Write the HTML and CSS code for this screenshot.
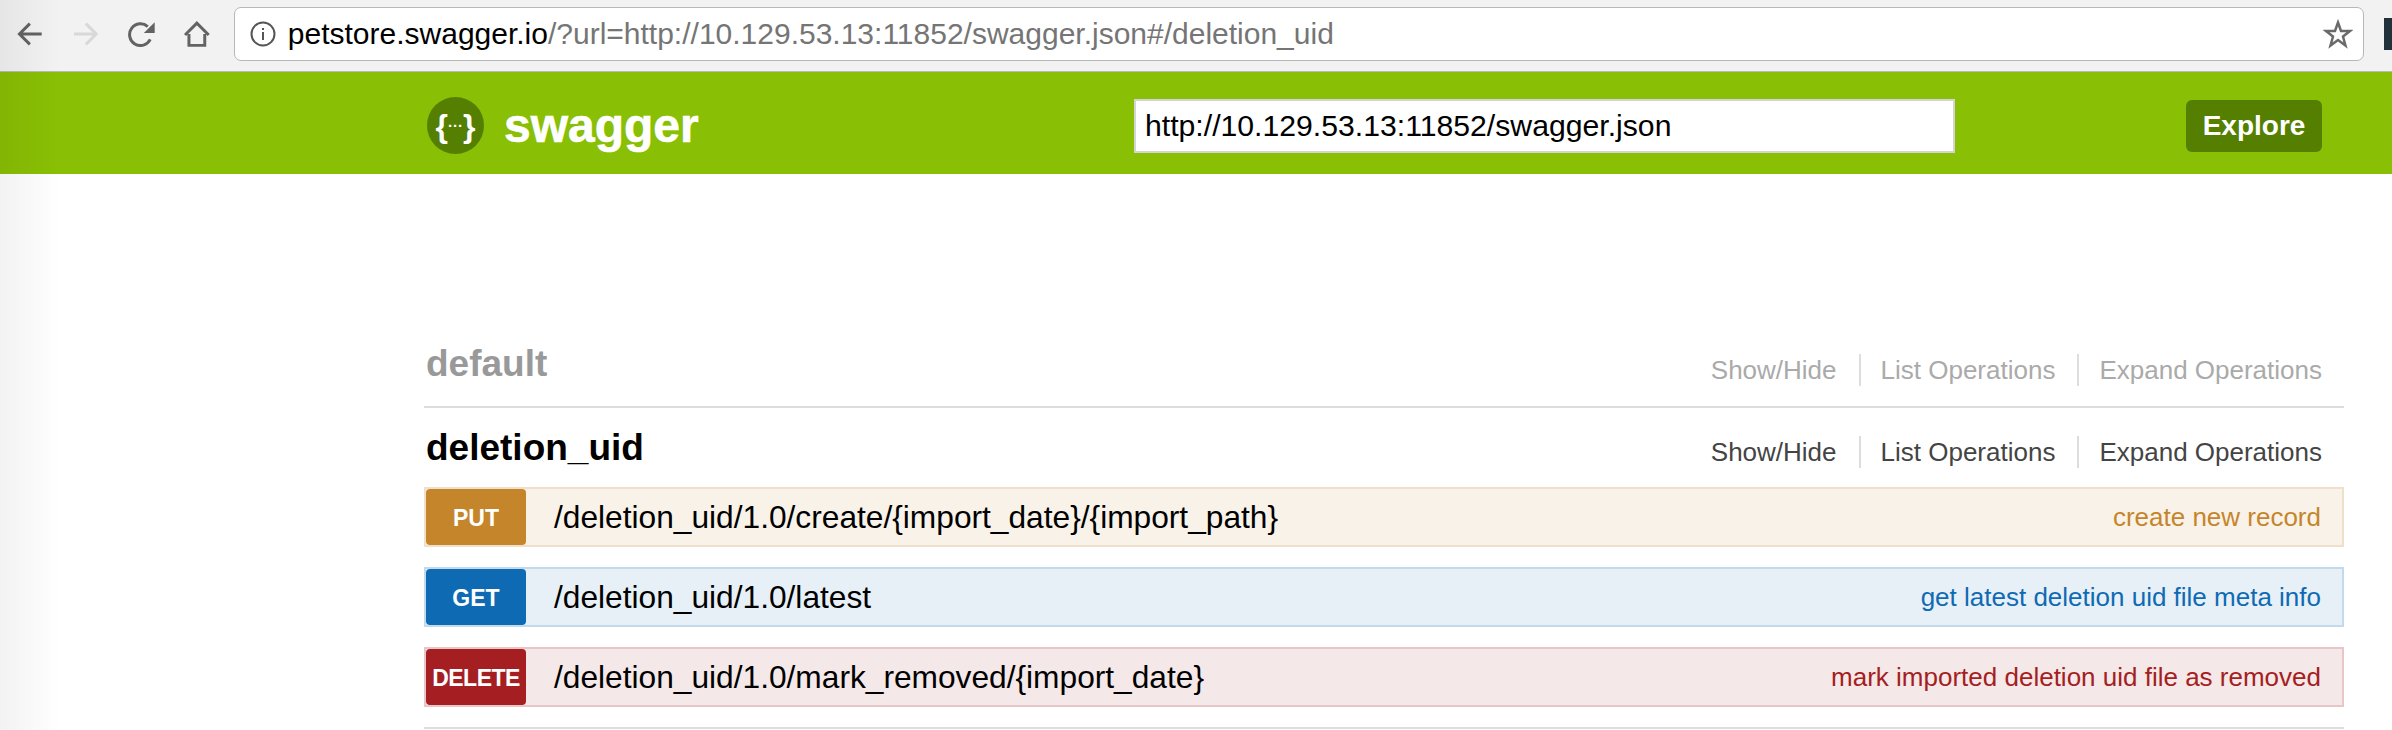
FILE: index.html
```html
<!DOCTYPE html>
<html>

<head>
    <meta charset="UTF-8">
    <title>Swagger UI</title>
    <link rel="stylesheet" href="styles.css">
</head>

<body>
    <div class="edge-shade"></div>

    <div class="toolbar">
        <svg class="nav-icon" viewBox="0 0 26 26"><path d="M25 13H3M13 2.500 2.500 13 13 23.500" /></svg>
        <svg class="nav-icon nav-off" viewBox="0 0 26 26"><path d="M1 13H23M13 2.500 23.500 13 13 23.500" /></svg>
        <svg class="nav-icon nav-reload" viewBox="0 0 28 26"><path d="M22.500 18.500A11 11 0 1 1 20 5.500" /><path class="nav-fill" d="M27 1V12H16Z" /></svg>
        <svg class="nav-icon" viewBox="0 0 26 26"><path d="M5 13V24.500H21V13M1 14 13 2 25 14" /></svg>
        <div class="omnibox">
            <svg class="info-icon" viewBox="0 0 26 26">
                <circle cx="13" cy="13" r="11.500" />
                <path d="M13 11V19M13 7V9" />
            </svg>
            <span class="url"><b>petstore.swagger.io</b>/?url=http://10.129.53.13:11852/swagger.json#/deletion_uid</span>
            <svg class="star-icon" viewBox="0 0 30 30"><path d="M15 3.500 18 12H27L20 17.500 22.500 26.500 15 21 7.500 26.500 10 17.500 3 12H12Z" /></svg>
        </div>
        <div class="profile"></div>
    </div>

    <div class="header">
        <div class="logo">{<i>···</i>}</div>
        <span class="brand">swagger</span>
        <div class="api-url">http://10.129.53.13:11852/swagger.json</div>
        <a class="explore">Explore</a>
    </div>

    <div class="main">
        <div class="resource muted">
            <h2>default</h2>
            <div class="links">
                <a>Show/Hide</a>
                <a>List Operations</a>
                <a>Expand Operations</a>
            </div>
        </div>

        <div class="resource open">
            <h2>deletion_uid</h2>
            <div class="links">
                <a>Show/Hide</a>
                <a>List Operations</a>
                <a>Expand Operations</a>
            </div>
        </div>

        <div class="op put">
            <span class="method">PUT</span>
            <span class="path">/deletion_uid/1.0/create/{import_date}/{import_path}</span>
            <span class="summary">create new record</span>
        </div>
        <div class="op get">
            <span class="method">GET</span>
            <span class="path">/deletion_uid/1.0/latest</span>
            <span class="summary">get latest deletion uid file meta info</span>
        </div>
        <div class="op delete">
            <span class="method">DELETE</span>
            <span class="path">/deletion_uid/1.0/mark_removed/{import_date}</span>
            <span class="summary">mark imported deletion uid file as removed</span>
        </div>
        <div class="end-rule"></div>
    </div>
</body>

</html>
```

FILE: styles.css
```css
body {
    margin: 0;
    background-color: #fff;
    font-family: "Liberation Sans", Arial, sans-serif;
    color: #000;
    overflow: hidden;
}

.edge-shade {
    position: absolute;
    top: 0;
    left: 0;
    bottom: 0;
    width: 60px;
    background: linear-gradient(to right, rgba(0, 0, 0, 0.05), rgba(0, 0, 0, 0));
    pointer-events: none;
}

.toolbar {
    display: flex;
    align-items: center;
    height: 72px;
    padding: 0 0 3px 17px;
    box-sizing: border-box;
    background-color: #f2f2f2;
    border-bottom: 1px solid #b9b9b9;
}

.nav-icon {
    width: 26px;
    height: 26px;
    margin-right: 30px;
    fill: none;
    stroke: #636363;
    stroke-width: 3;
}

.nav-icon .nav-fill {
    fill: #636363;
    stroke: none;
}

.nav-off {
    stroke: #d8d8d8;
}

.nav-reload {
    width: 28px;
    margin-right: 28px;
}

.omnibox {
    display: flex;
    align-items: center;
    width: 2127px;
    height: 52px;
    margin-left: -6px;
    padding: 0 10px 0 15px;
    box-sizing: content-box;
    background-color: #fff;
    border: 1px solid #b7b7b7;
    border-radius: 7px;
    color: #757575;
    font-size: 30px;
}

.info-icon {
    width: 26px;
    height: 26px;
    margin-right: 12px;
    fill: none;
    stroke: #555;
    stroke-width: 2;
}

.url {
    flex: 1;
}

.url b {
    font-weight: normal;
    color: #000;
}

.star-icon {
    width: 30px;
    height: 30px;
    fill: none;
    stroke: #6a6a6a;
    stroke-width: 2.500;
}

.profile {
    width: 8px;
    height: 32px;
    margin-left: 20px;
    background-color: #22323a;
}

.header {
    display: flex;
    align-items: center;
    height: 102px;
    padding: 5px 0 0 427px;
    box-sizing: border-box;
    background-color: #89bf04;
}

.logo {
    display: flex;
    align-items: center;
    justify-content: center;
    width: 57px;
    height: 57px;
    border-radius: 50%;
    background-color: #547f00;
    color: #fff;
    font-size: 32px;
    font-weight: bold;
    line-height: 1;
}

.logo i {
    font-style: normal;
    font-size: 15px;
    font-weight: bold;
}

.brand {
    width: 630px;
    margin-left: 20px;
    color: #fff;
    font-size: 48px;
    font-weight: bold;
    -webkit-text-stroke: 0.6px #fff;
}

.api-url {
    display: flex;
    align-items: center;
    width: 808px;
    height: 50px;
    padding-left: 9px;
    background-color: #fff;
    border: 2px solid #d4d4d4;
    font-size: 30.200px;
}

.explore {
    display: flex;
    align-items: center;
    justify-content: center;
    width: 136px;
    height: 52px;
    margin-left: 231px;
    border-radius: 6px;
    background-color: #547f00;
    color: #fff;
    font-size: 28px;
    font-weight: bold;
}

.main {
    width: 1920px;
    margin-left: 424px;
    padding-top: 173px;
}

.resource {
    display: flex;
    align-items: center;
    justify-content: space-between;
    padding: 0 22px 0 2px;
    box-sizing: border-box;
}

.resource h2 {
    margin: 0;
    font-size: 37px;
    font-weight: bold;
}

.resource.muted {
    height: 61px;
    padding-bottom: 26px;
    border-bottom: 2px solid #ddd;
}

.resource.muted h2 {
    color: #999;
}

.resource.muted .links {
    margin-top: 12px;
}

.resource.muted .links a {
    color: #aaa;
}

.resource.open {
    height: 79px;
}

.links {
    display: flex;
    margin-top: 8px;
}

.links a {
    padding: 0 22px 0 20px;
    border-right: 2px solid #ddd;
    color: #444;
    font-size: 26px;
    line-height: 32px;
}

.links a:last-child {
    padding-right: 0;
    border-right: 0;
}

.op {
    display: flex;
    align-items: center;
    height: 56px;
    margin-bottom: 20px;
    padding-right: 21px;
    border: 2px solid;
}

.method {
    display: flex;
    align-items: center;
    justify-content: center;
    width: 100px;
    height: 56px;
    margin-right: 28px;
    padding-top: 3px;
    box-sizing: border-box;
    border-radius: 4px;
    color: #fff;
    font-size: 23px;
    font-weight: bold;
}

.path {
    flex: 1;
    font-size: 31.700px;
}

.summary {
    font-size: 26px;
}

.put {
    background-color: #f9f2e9;
    border-color: #f0e0ca;
}

.put .method {
    background-color: #c5862b;
}

.put .summary {
    color: #c5862b;
}

.get {
    background-color: #e7f0f7;
    border-color: #c3d9ec;
}

.get .method {
    background-color: #0f6ab4;
}

.get .summary {
    color: #0f6ab4;
}

.delete {
    background-color: #f5e8e8;
    border-color: #e8c6c7;
}

.delete .method {
    background-color: #a41e22;
    letter-spacing: -0.5px;
}

.delete .summary {
    color: #a41e22;
}

.end-rule {
    height: 2px;
    background-color: #ddd;
}
```
